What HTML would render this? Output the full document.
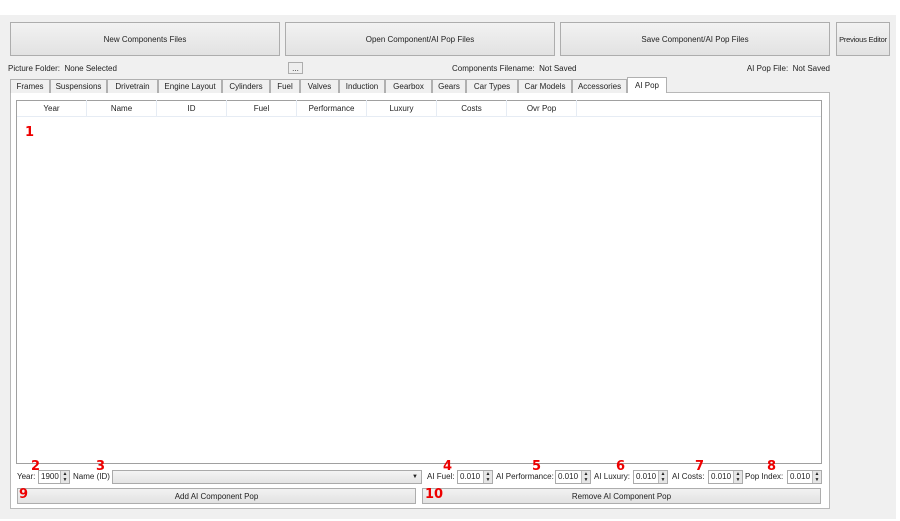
<!DOCTYPE html>
<html><head><style>
*{margin:0;padding:0;box-sizing:border-box}
body{width:900px;height:521px;background:#fff;position:relative;overflow:hidden;font-family:"Liberation Sans",sans-serif;font-size:8px;color:#222}
.a{position:absolute}
.bg{left:0;top:15px;width:896px;height:504px;background:#f0f0f0}
.btn{position:absolute;border:1px solid #adadad;background:linear-gradient(#f2f2f2,#e2e2e2);display:flex;align-items:center;justify-content:center;font-size:8px;color:#222;white-space:nowrap}
.tab{position:absolute;top:79px;height:14px;border:1px solid #b0b0b0;border-bottom:none;background:#f0f0f0;font-size:8px;display:flex;align-items:center;justify-content:center;white-space:nowrap}
.pane{left:10px;top:92px;width:820px;height:417px;border:1px solid #b8b8b8;background:#fff}
.tbl{left:16px;top:100px;width:806px;height:364px;border:1px solid #a0a0a0;background:#fff}
.hd{position:absolute;top:100px;height:17px;width:70px;border-right:1px solid #e6ecf4;border-bottom:1px solid #e6ecf4;font-size:8px;display:flex;align-items:center;justify-content:center}
.red{position:absolute;color:#e00;font-size:13px;font-weight:bold;font-family:"DejaVu Sans",sans-serif;line-height:1}
.lbl{position:absolute;top:472px;font-size:8px;white-space:nowrap}
.spin{position:absolute;top:470px;height:14px;border:1px solid #aaa;background:#fff;font-size:8px;padding-left:2px;line-height:12px}
.spin i{position:absolute;right:0;top:0;width:9px;height:12px;background:#e6e6e6;border-left:1px solid #bbb;font-style:normal;font-size:5px;line-height:6px;text-align:center}
</style></head><body>
<div class="a bg"></div>
<div class="btn" style="left:10px;top:22px;width:270px;height:34px">New Components Files</div>
<div class="btn" style="left:285px;top:22px;width:270px;height:34px">Open Component/AI Pop Files</div>
<div class="btn" style="left:560px;top:22px;width:270px;height:34px">Save Component/AI Pop Files</div>
<div class="btn" style="left:836px;top:22px;width:54px;height:34px;font-size:7.5px;letter-spacing:-0.2px">Previous Editor</div>
<div class="a" style="left:8px;top:64px">Picture Folder:&nbsp; None Selected</div>
<div class="btn" style="left:288px;top:62px;width:15px;height:12px;background:#eee">...</div>
<div class="a" style="left:452px;top:64px">Components Filename:&nbsp; Not Saved</div>
<div class="a" style="right:70px;top:64px;white-space:nowrap">AI Pop File:&nbsp; Not Saved</div>
<div class="a pane"></div>
<div class="tab" style="left:10px;width:40px">Frames</div>
<div class="tab" style="left:50px;width:57px">Suspensions</div>
<div class="tab" style="left:107px;width:51px">Drivetrain</div>
<div class="tab" style="left:158px;width:64px">Engine Layout</div>
<div class="tab" style="left:222px;width:48px">Cylinders</div>
<div class="tab" style="left:270px;width:30px">Fuel</div>
<div class="tab" style="left:300px;width:39px">Valves</div>
<div class="tab" style="left:339px;width:46px">Induction</div>
<div class="tab" style="left:385px;width:47px">Gearbox</div>
<div class="tab" style="left:432px;width:34px">Gears</div>
<div class="tab" style="left:466px;width:52px">Car Types</div>
<div class="tab" style="left:518px;width:54px">Car Models</div>
<div class="tab" style="left:572px;width:55px">Accessories</div>
<div class="tab" style="left:627px;top:77px;width:40px;height:16px;background:#fff;align-items:flex-start;padding-top:3px">AI Pop</div>
<div class="a tbl"></div>
<div class="hd" style="left:17px">Year</div>
<div class="hd" style="left:87px">Name</div>
<div class="hd" style="left:157px">ID</div>
<div class="hd" style="left:227px">Fuel</div>
<div class="hd" style="left:297px">Performance</div>
<div class="hd" style="left:367px">Luxury</div>
<div class="hd" style="left:437px">Costs</div>
<div class="hd" style="left:507px">Ovr Pop</div>
<div class="a" style="left:577px;top:116px;width:244px;border-bottom:1px solid #e6ecf4"></div>
<div class="red" style="left:25px;top:126px">1</div>
<div class="lbl" style="left:17px">Year:</div>
<div class="spin" style="left:38px;width:32px">1900<i>▲<br>▼</i></div>
<div class="lbl" style="left:73px">Name (ID)</div>
<div class="spin" style="left:112px;width:310px;background:linear-gradient(#f4f4f4,#e4e4e4)"><span style="position:absolute;right:3px;top:0;font-size:6px">▼</span></div>
<div class="lbl" style="left:427px">AI Fuel:</div>
<div class="spin" style="left:457px;width:36px">0.010<i>▲<br>▼</i></div>
<div class="lbl" style="left:496px">AI Performance:</div>
<div class="spin" style="left:555px;width:36px">0.010<i>▲<br>▼</i></div>
<div class="lbl" style="left:594px">AI Luxury:</div>
<div class="spin" style="left:633px;width:35px">0.010<i>▲<br>▼</i></div>
<div class="lbl" style="left:672px">AI Costs:</div>
<div class="spin" style="left:708px;width:35px">0.010<i>▲<br>▼</i></div>
<div class="lbl" style="left:745px">Pop Index:</div>
<div class="spin" style="left:787px;width:35px">0.010<i>▲<br>▼</i></div>
<div class="btn" style="left:17px;top:488px;width:399px;height:16px">Add AI Component Pop</div>
<div class="btn" style="left:422px;top:488px;width:399px;height:16px">Remove AI Component Pop</div>
<div class="red" style="left:31px;top:460px">2</div>
<div class="red" style="left:96px;top:460px">3</div>
<div class="red" style="left:443px;top:460px">4</div>
<div class="red" style="left:532px;top:460px">5</div>
<div class="red" style="left:616px;top:460px">6</div>
<div class="red" style="left:695px;top:460px">7</div>
<div class="red" style="left:767px;top:460px">8</div>
<div class="red" style="left:19px;top:488px">9</div>
<div class="red" style="left:425px;top:488px">10</div>
</body></html>
